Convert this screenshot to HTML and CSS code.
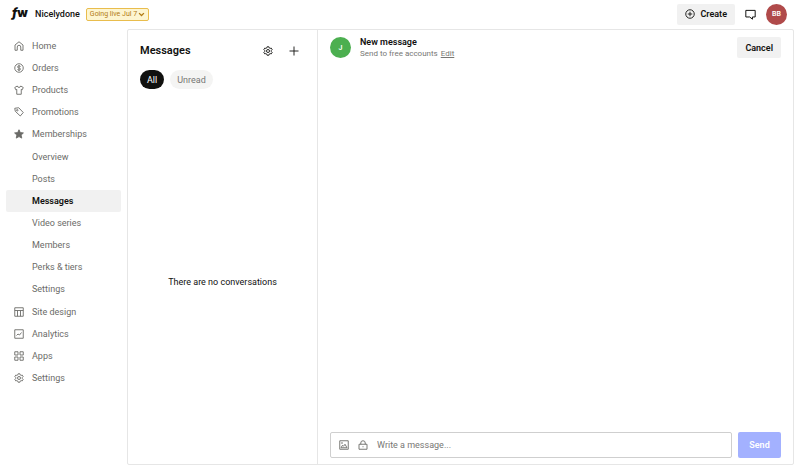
FILE: index.html
```html
<!DOCTYPE html>
<html lang="en">
<head>
<meta charset="utf-8">
<title>Messages</title>
<link rel="stylesheet" href="styles.css">
</head>
<body>
<svg class="sprite" aria-hidden="true">
  <symbol id="gear" viewBox="0 0 20 20"><path d="M8.3 1.5h3.4l.7 2.3 1.8 1 2.3-.6 1.8 3-1.7 1.7v2.2l1.7 1.7-1.8 3-2.3-.6-1.8 1-.7 2.3H8.3l-.7-2.3-1.8-1-2.3.6-1.8-3 1.7-1.7V8.9L1.7 7.2l1.8-3 2.3.6 1.8-1z"/><circle cx="10" cy="10" r="3"/></symbol>
</svg>
<header class="topbar">
  <a class="logo" href="#" aria-label="Home page"><i>f</i><b>w</b></a>
  <span class="shop">Nicelydone</span>
  <button class="live">Going live Jul 7 <svg class="chevron" viewBox="0 0 10 10"><path d="M1.500 3l3.500 3.500L8.500 3"/></svg></button>
  <div class="actions">
    <button class="btn create"><svg class="icon" viewBox="0 0 20 20"><circle cx="10" cy="10" r="8.500"/><path d="M10 5.500v9M5.500 10h9"/></svg>Create</button>
    <button class="plain" aria-label="Chat"><svg class="chat" viewBox="0 0 20 20"><path d="M1.500 2.500h17v12h-5v4l-5-4h-7z"/></svg></button>
    <button class="avatar user">BB</button>
  </div>
</header>
<div class="layout">
  <nav class="nav" aria-label="Main">
    <a href="#"><svg class="icon" viewBox="0 0 20 20"><path d="M2 8l8-6.500L18 8v10.500h-4.500V12a3.500 3.500 0 0 0-7 0v6.500H2z"/></svg>Home</a>
    <a href="#"><svg class="icon" viewBox="0 0 20 20"><circle cx="10" cy="10" r="8.500"/><path d="M13 7.500C12.500 6 11.500 5.800 10 5.800c-4 0-4 4 0 4.200 4 .2 4 4.200 0 4.200-1.500 0-2.600-.4-3-1.800M10 4v12"/></svg>Orders</a>
    <a href="#"><svg class="icon" viewBox="0 0 20 20"><path d="M6.500 2L1.500 5l2 4.500 2-.8v9.800h9V8.700l2 .8 2-4.500-5-3c-1 3.800-6 3.800-7 0z"/></svg>Products</a>
    <a href="#"><svg class="icon" viewBox="0 0 20 20"><path d="M1.500 2.500l8-1 9 9.500-6 7-10-9.500z"/><circle cx="6.500" cy="6.500" r="1.500"/></svg>Promotions</a>
    <a href="#"><svg class="icon solid" viewBox="0 0 20 20"><path d="M10 1.500l2.600 5.700 6.200.7-4.600 4.200 1.300 6.100-5.500-3.100-5.500 3.100 1.300-6.100L1.200 7.900l6.200-.7z"/></svg>Memberships</a>
    <div class="subnav">
      <a href="#">Overview</a>
      <a href="#">Posts</a>
      <a class="current" href="#" aria-current="page">Messages</a>
      <a href="#">Video series</a>
      <a href="#">Members</a>
      <a href="#">Perks &amp; tiers</a>
      <a href="#">Settings</a>
    </div>
    <a href="#"><svg class="icon" viewBox="0 0 20 20"><path d="M1.500 1.500h17v17h-17zM1.500 7h17M7 7v11.500M13 7v11.500"/></svg>Site design</a>
    <a href="#"><svg class="icon" viewBox="0 0 20 20"><path d="M1.500 1.500h17v17h-17zM5 13l3-3 3 2 4-5"/></svg>Analytics</a>
    <a href="#"><svg class="icon" viewBox="0 0 20 20"><path d="M1.500 1.500H8V8H1.500zM12 1.500h6.500V8H12zM1.500 12H8v6.500H1.500zM12 12h6.500v6.500H12z"/></svg>Apps</a>
    <a href="#"><svg class="icon"><use href="#gear"/></svg>Settings</a>
  </nav>
  <main class="panel">
    <section class="inbox">
      <div class="inbox-head">
        <h1>Messages</h1>
        <button class="plain" aria-label="Message settings"><svg class="icon"><use href="#gear"/></svg></button>
        <button class="plain" aria-label="New message"><svg class="icon" viewBox="0 0 20 20"><path d="M10 1v18M1 10h18"/></svg></button>
      </div>
      <div class="filters">
        <button class="pill selected">All</button>
        <button class="pill">Unread</button>
      </div>
      <p class="empty">There are no conversations</p>
    </section>
    <section class="thread">
      <div class="thread-head">
        <span class="avatar recipient">J</span>
        <div class="summary">
          <h2>New message</h2>
          <p>Send to free accounts <a href="#">Edit</a></p>
        </div>
        <button class="btn cancel">Cancel</button>
      </div>
      <form class="composer">
        <div class="field">
          <button type="button" class="plain" aria-label="Add image"><svg class="icon" viewBox="0 0 20 20"><path d="M1.500 1.500h17v17h-17zM4 15.500l3-5 2 2 3-4 4 7z"/><circle cx="6" cy="6" r=".8"/></svg></button>
          <button type="button" class="plain" aria-label="Lock message"><svg class="icon" viewBox="0 0 20 20"><path d="M2 8.500h16v10H2zM5.500 8.500V6a4.500 4.500 0 0 1 9 0v2.500M10 12.500v2"/></svg></button>
          <input type="text" aria-label="Message" placeholder="Write a message...">
        </div>
        <button type="button" class="send">Send</button>
      </form>
    </section>
  </main>
</div>
</body>
</html>
```
FILE: styles.css
```css
* { box-sizing: border-box; }
body {
  margin: 0;
  min-height: 100vh;
  display: flex;
  flex-direction: column;
  background: #fff;
  color: #11110f;
  font: 9px/12px Roboto, "Liberation Sans", sans-serif;
}
h1, h2, p { margin: 0; }
button, input { font: inherit; color: inherit; border: 0; padding: 0; }
a { color: inherit; text-decoration: none; }
svg { display: block; flex: none; fill: none; stroke: currentColor; stroke-width: 1.8; }
.sprite { position: absolute; width: 0; height: 0; }
.icon { width: 10px; height: 10px; }
.solid { fill: currentColor; }
.plain { background: none; display: flex; }

.topbar { display: flex; align-items: center; height: 28px; margin-bottom: 1px; padding: 0 13px 0 12px; }
.logo {
  display: flex;
  width: 23px;
  padding-bottom: 2px;
  font: 900 12px/14px Inter, sans-serif;
}
.shop { font-weight: 500; margin-right: 6px; }
.live {
  display: flex;
  align-items: center;
  gap: 1px;
  height: 13px;
  padding: 0 3px;
  border: 1px solid #e9bd4d;
  border-radius: 2px;
  background: #fdf5d0;
  color: #b27b13;
  font-size: 7px;
}
.chevron { width: 7px; height: 7px; }
.actions { display: flex; align-items: center; gap: 10px; margin-left: auto; }
.btn {
  display: flex;
  align-items: center;
  justify-content: center;
  gap: 5px;
  height: 21px;
  padding: 0 8px;
  border-radius: 2px;
  background: #f1f1f1;
  font-weight: 600;
}
.chat { width: 11px; height: 11px; }
.avatar {
  display: flex;
  align-items: center;
  justify-content: center;
  flex: none;
  width: 21px;
  height: 21px;
  border-radius: 50%;
  color: #fff;
  font-size: 7px;
  font-weight: 600;
}
.user { background: #b04a4a; }
.recipient { background: #4caf50; }

.layout { flex: 1; display: flex; padding: 0 6px 5px; }
.nav { flex: none; width: 115px; margin-right: 6px; padding-top: 6px; color: #6b6b68; }
.nav a {
  display: flex;
  align-items: center;
  gap: 8px;
  height: 22px;
  padding-left: 8px;
}
.subnav { margin: 1px 0; }
.nav .subnav a { padding-left: 26px; }
.nav .current { border-radius: 2px; background: #f1f1f1; color: #11110f; font-weight: 600; }

.panel { flex: 1; display: flex; border: 1px solid #e6e6e6; border-radius: 2px; }
.inbox { flex: none; width: 190px; display: flex; flex-direction: column; border-right: 1px solid #e6e6e6; }
.inbox-head { display: flex; align-items: center; gap: 16px; padding: 14px 18px 12px 12px; }
h1 { margin-right: auto; font-size: 11px; line-height: 14px; font-weight: 600; }
.filters { display: flex; gap: 6px; padding: 0 12px; }
.pill { height: 19px; padding: 0 7px; border-radius: 10px; background: #f4f4f3; color: #777774; }
.pill.selected { background: #11110f; color: #fff; }
.empty { margin: auto; padding-top: 10px; text-align: center; }

.thread { flex: 1; display: flex; flex-direction: column; padding: 6px 12px; }
.thread-head { display: flex; align-items: center; gap: 9px; }
h2 { font-size: 9px; line-height: 11px; font-weight: 600; }
.summary { padding-top: 1px; }
.summary p { color: #777774; font-size: 8px; line-height: 11px; }
.summary a { margin-left: 1px; text-decoration: underline; }
.cancel { margin-left: auto; }
.composer { display: flex; gap: 6px; margin-top: auto; }
.field {
  flex: 1;
  display: flex;
  align-items: center;
  gap: 9px;
  height: 26px;
  padding: 0 8px;
  border: 1px solid #cfcfcf;
  border-radius: 2px;
  color: #6b6b68;
}
.field input { flex: 1; min-width: 0; background: none; outline: 0; }
.field input::placeholder { color: #777774; opacity: 1; }
.send { width: 43px; height: 26px; border-radius: 2px; background: #a3b1ff; color: #fff; font-weight: 600; }
```
